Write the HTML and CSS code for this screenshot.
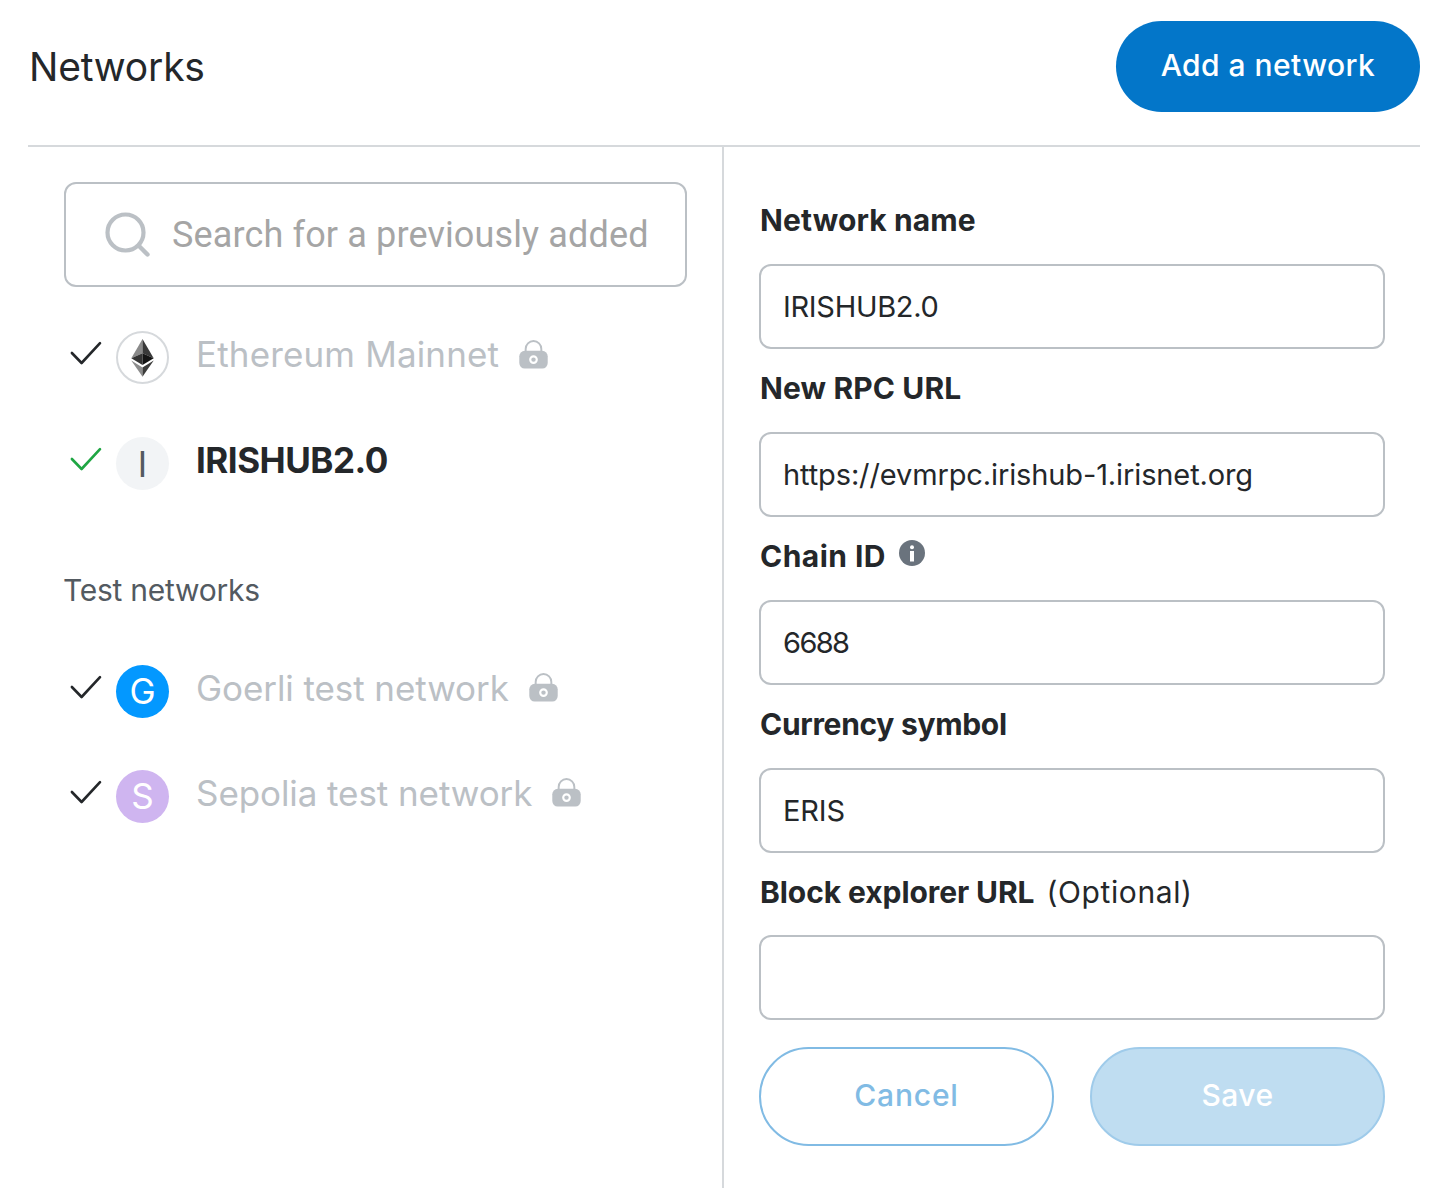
FILE: index.html
```html
<!DOCTYPE html>
<html lang="en">
<head>
<meta charset="utf-8">
<title>Networks</title>
<link rel="stylesheet" href="styles.css">
</head>
<body>
<svg class="defs" width="0" height="0" aria-hidden="true">
  <symbol id="check" viewBox="0 0 32 26"><path d="M1.9 12 11.6 22 30 2.2" fill="none" stroke="currentColor" stroke-width="2.6" stroke-linecap="round" stroke-linejoin="round"/></symbol>
  <symbol id="lock" viewBox="0 0 30 30">
    <path d="M6.9 12V9.2a8.1 8.1 0 0 1 16.2 0V12" fill="none" stroke="currentColor" stroke-width="2"/>
    <rect x="0.3" y="11.2" width="29.4" height="18.3" rx="5.6" fill="currentColor"/>
    <circle cx="15" cy="20.3" r="3.4" fill="none" stroke="#fff" stroke-width="2.2"/>
  </symbol>
</svg>
<div class="page">
  <header class="header">
    <h1 class="title">Networks</h1>
    <button class="btn btn-add">Add a network</button>
  </header>
  <main class="body">
    <section class="list">
      <div class="search">
        <svg class="search-icon" viewBox="0 0 46 46"><circle cx="20.5" cy="20.5" r="18" fill="none" stroke="currentColor" stroke-width="4.2"/><path d="M34 34 42.5 42.5" stroke="currentColor" stroke-width="4.4" stroke-linecap="round"/></svg>
        <span class="placeholder">Search for a previously added</span>
      </div>
      <div class="row">
        <svg class="check"><use href="#check"/></svg>
        <span class="avatar avatar-eth">
          <svg class="eth" viewBox="0 0 23 38">
            <path d="M11.5 0v14.2L0.3 19.3z" fill="#8a8a8a"/><path d="M11.5 0v14.2l11.2 5.1z" fill="#393939"/>
            <path d="M0.3 19.3 11.5 14.2v11.9z" fill="#343434"/><path d="M22.7 19.3 11.5 14.2v11.9z" fill="#141414"/>
            <path d="M0.3 21.6 11.5 28.4v9.4z" fill="#8c8c8c"/><path d="M22.7 21.6 11.5 28.4v9.4z" fill="#3c3c3b"/>
          </svg>
        </span>
        <span class="name name-eth">Ethereum Mainnet</span>
        <svg class="lock"><use href="#lock"/></svg>
      </div>
      <div class="row">
        <svg class="check check-active"><use href="#check"/></svg>
        <span class="avatar avatar-iris">I</span>
        <span class="name name-active">IRISHUB2.0</span>
      </div>
      <h2 class="subtitle">Test networks</h2>
      <div class="row row-test">
        <svg class="check"><use href="#check"/></svg>
        <span class="avatar avatar-goerli">G</span>
        <span class="name">Goerli test network</span>
        <svg class="lock"><use href="#lock"/></svg>
      </div>
      <div class="row row-test">
        <svg class="check"><use href="#check"/></svg>
        <span class="avatar avatar-sepolia">S</span>
        <span class="name">Sepolia test network</span>
        <svg class="lock"><use href="#lock"/></svg>
      </div>
    </section>
    <section class="form">
      <div class="label label-name">Network name</div>
      <div class="input input-name">IRISHUB2.0</div>
      <div class="label label-name">New RPC URL</div>
      <div class="input">https://evmrpc.irishub-1.irisnet.org</div>
      <div class="label label-chain">Chain ID
        <svg class="info" viewBox="0 0 26 26"><circle cx="13" cy="13" r="13" fill="#6a737d"/><circle cx="13" cy="7.2" r="2" fill="#fff"/><path d="M11 11h4v10.5h-4z" fill="#fff"/></svg>
      </div>
      <div class="input input-chain">6688</div>
      <div class="label label-currency">Currency symbol</div>
      <div class="input">ERIS</div>
      <div class="label label-explorer">Block explorer URL <span class="optional">(Optional)</span></div>
      <div class="input"></div>
      <div class="actions">
        <button class="btn btn-cancel">Cancel</button>
        <button class="btn btn-save">Save</button>
      </div>
    </section>
  </main>
</div>
</body>
</html>
```
FILE: styles.css
```css
* { box-sizing: border-box; }
body { margin: 0; background: #fff; color: #24272a; font-family: Inter, "Liberation Sans", sans-serif; }
.defs { display: block; height: 0; }
.page { display: flex; flex-direction: column; height: 1188px; padding: 0 30px 0 28px; overflow: hidden; }

.header { display: flex; justify-content: space-between; height: 147px; padding-top: 21px; border-bottom: 2px solid #d6d9dc; }
.title { margin: 0; padding-left: 1px; font-size: 39px; font-weight: 400; line-height: 92px; letter-spacing: -0.2px; }
.btn { padding: 0 0 3px; border: 0; border-radius: 50px; font: 500 30px Inter, "Liberation Sans", sans-serif; text-align: center; }
.btn-add { width: 304px; height: 91px; background: #0376c9; color: #fff; letter-spacing: 0.45px; }

.body { display: flex; flex: 1; }
.list { width: 696px; padding: 35px 35px 0 36px; border-right: 2px solid #d6d9dc; }
.search { display: flex; align-items: center; gap: 21px; height: 105px; margin-bottom: 14px; padding-left: 39px; border: 2px solid #bbc0c5; border-radius: 12px; color: #bbc0c5; }
.search-icon { width: 46px; height: 46px; flex: none; }
.placeholder { padding-top: 1px; font: 400 36px/44px Roboto, sans-serif; letter-spacing: 0.14px; color: #a5a5a5; white-space: nowrap; }

.row { display: flex; align-items: center; height: 106px; padding-left: 6px; }
.row-test { height: 105px; }
.check { width: 32px; height: 26px; margin-right: 14px; color: #24272a; }
.check-active { color: #1fa643; }
.avatar { display: flex; align-items: center; justify-content: center; width: 53px; height: 53px; margin: 7px 27px 0 0; border-radius: 50%; font-size: 35px; color: #fff; }
.avatar-eth { border: 2px solid #d6d9dc; }
.avatar-iris { background: #f2f4f6; color: #535a61; }
.avatar-goerli { background: #0398ff; }
.avatar-sepolia { background: #cfb5f0; }
.eth { width: 23px; height: 38px; }
.name { font-size: 35px; line-height: 42px; letter-spacing: -0.08px; color: #bbc0c5; white-space: nowrap; }
.name-eth { letter-spacing: 0.15px; }
.name-active { font-weight: 700; letter-spacing: -0.5px; color: #24272a; }
.lock { width: 29px; height: 29px; margin: 0 0 0 20px; }
.row .lock { color: #bbc0c5; }
.subtitle { height: 122px; margin: 0; padding-top: 59px; font-size: 30px; font-weight: 400; line-height: 36px; letter-spacing: -0.25px; text-indent: -1px; color: #535a61; }

.form { flex: 1; padding: 34px 35px 0; }
.label { display: flex; align-items: center; height: 83px; padding: 0 0 5px 1px; font-size: 30px; font-weight: 700; white-space: nowrap; }
.label-name { letter-spacing: 0.12px; }
.label-chain { letter-spacing: 0.45px; }
.label-currency { padding-bottom: 6px; letter-spacing: -0.3px; }
.label-explorer { height: 82px; letter-spacing: -0.08px; }
.optional { margin-left: 12px; font-weight: 400; letter-spacing: 0.6px; }
.info { width: 26px; height: 26px; margin: -6px 0 0 13px; }
.input { display: flex; align-items: center; height: 85px; padding-left: 22px; border: 2px solid #bbc0c5; border-radius: 12px; font-size: 29px; letter-spacing: -0.12px; }
.input-name { letter-spacing: -0.3px; }
.input-chain { letter-spacing: -1.6px; }
.actions { display: flex; gap: 36px; margin-top: 27px; }
.actions .btn { flex: 1; height: 99px; }
.btn-cancel { border: 2px solid #81bbe4; background: #fff; color: #81bbe4; letter-spacing: 0.8px; }
.btn-save { border: 2px solid #9fcbea; background: #bfddf1; color: #fff; letter-spacing: 0.4px; }
```
